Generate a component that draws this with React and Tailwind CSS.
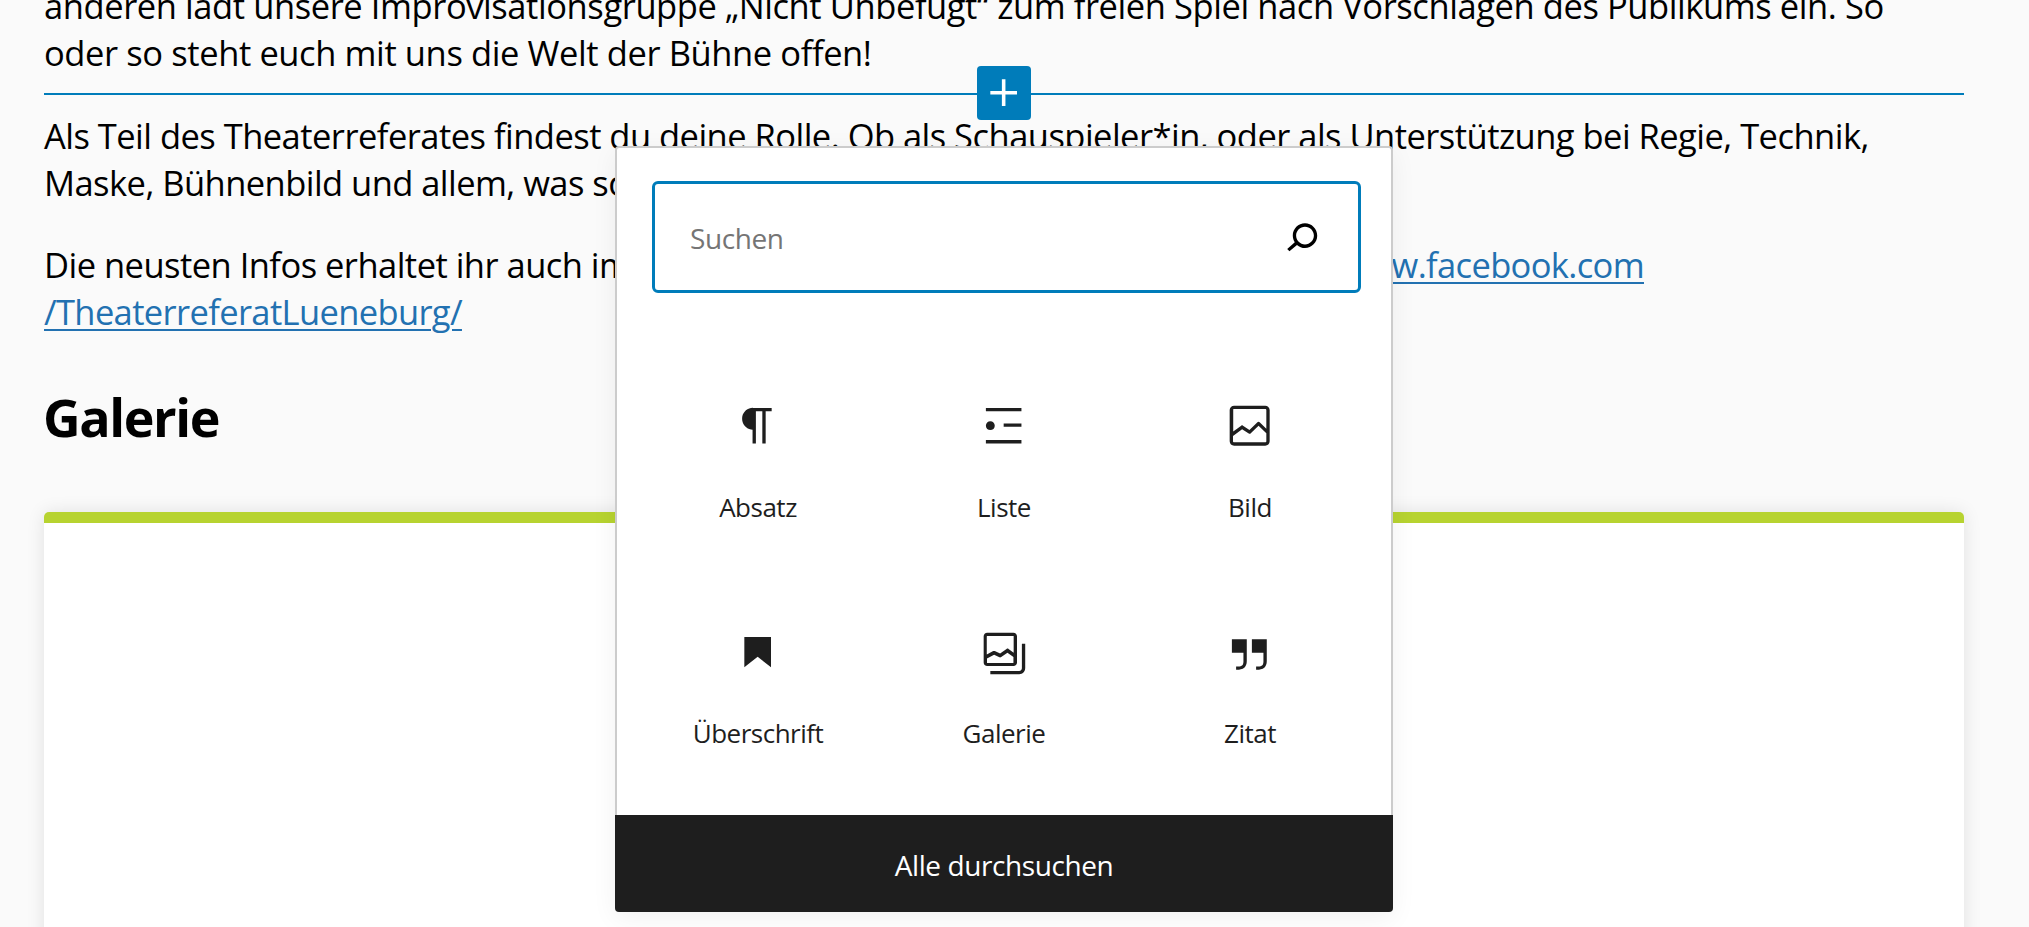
function Icon({ d, className = "" }) {
  return (
    <svg viewBox="0 0 24 24" fill="currentColor" className={`size-[53.33px] shrink-0 ${className}`} aria-hidden="true">
      <path d={d} />
    </svg>
  );
}

const plus = "M18 11.2h-5.2V6h-1.6v5.2H6v1.6h5.2V18h1.6v-5.2H18z";
const search =
  "M13.5 6C10.5 6 8 8.5 8 11.5c0 1.1.3 2.1.9 3l-3.4 3 1 1.1 3.4-2.9c1 .9 2.2 1.4 3.6 1.4 3 0 5.5-2.5 5.5-5.5C19 8.5 16.5 6 13.5 6zm0 9.5c-2.2 0-4-1.8-4-4s1.8-4 4-4 4 1.8 4 4-1.8 4-4 4z";

const blocks = [
  {
    label: "Absatz",
    d: "M18.3 4H9.9v-.1l-.9.2c-2.3.4-4 2.4-4 4.8s1.7 4.4 4 4.8l.7.1V20h1.5V5.5h2.9V20h1.5V5.5h2.7V4z",
  },
  {
    label: "Liste",
    d: "M4 4v1.5h16V4H4zm8 8.5h8V11h-8v1.5zM4 20h16v-1.5H4V20zm4-8c0-1.1-.9-2-2-2s-2 .9-2 2 .9 2 2 2 2-.9 2-2z",
  },
  {
    label: "Bild",
    d: "M19 3H5c-1.1 0-2 .9-2 2v14c0 1.1.9 2 2 2h14c1.1 0 2-.9 2-2V5c0-1.1-.9-2-2-2zM5 4.5h14c.3 0 .5.2.5.5v8.4l-3-2.9c-.3-.3-.8-.3-1 0L11.9 14 9 12c-.3-.2-.6-.2-.8 0l-3.6 2.6V5c-.1-.3.1-.5.4-.5zm14 15H5c-.3 0-.5-.2-.5-.5v-2.4l4.1-3 3 1.9c.3.2.7.2.9-.1L16 12l3.5 3.4V19c0 .3-.2.5-.5.5z",
  },
  { label: "Überschrift", d: "M6 5V18.5911L12 13.8473L18 18.5911V5H6Z" },
  {
    label: "Galerie",
    d: "M20.2 8v11c0 .7-.6 1.2-1.2 1.2H6v1.5h13c1.5 0 2.7-1.2 2.7-2.8V8zM18 16.4V4.6c0-.9-.7-1.6-1.6-1.6H4.6C3.7 3 3 3.7 3 4.6v11.8c0 .9.7 1.6 1.6 1.6h11.8c.9 0 1.6-.7 1.6-1.6zM4.5 4.6c0-.1.1-.1.1-.1h11.8c.1 0 .1.1.1.1V12l-2.3-1.7c-.3-.2-.6-.2-.9 0l-2.9 2.1L8 11.3c-.2-.1-.5-.1-.7 0l-2.9 1.5V4.6zm0 11.8v-1.8l3.2-1.7 2.4 1.2c.2.1.5.1.8-.1l2.8-2 2.7 2v2.5c0 .1-.1.1-.1.1H4.6c0 .1-.1 0-.1-.1z",
  },
  {
    label: "Zitat",
    d: "M13 6v6h5.2v4c0 .8-.2 1.4-.5 1.7-.6.6-1.6.6-2.5.5h-.3v1.5h.5c1 0 2.3-.1 3.3-1 .6-.6 1-1.6 1-2.8V6H13zm-9 6h5.2v4c0 .8-.2 1.4-.5 1.7-.6.6-1.6.6-2.5.5h-.3v1.5h.5c1 0 2.3-.1 3.3-1 .6-.6 1-1.6 1-2.8V6H4v6z",
  },
];

function InsertionPoint() {
  return (
    <div className="absolute top-[66px] left-[44px] flex h-[54px] w-[1920px] justify-center">
      <div className="absolute inset-x-0 top-[27px] h-[2px] bg-[#007cba]" />
      <button className="relative flex size-[54px] items-start justify-center rounded-[4px] bg-[#007cba] text-white">
        <Icon d={plus} />
      </button>
    </div>
  );
}

function Inserter() {
  return (
    <div className="absolute top-[146px] left-[615px] w-[778px] rounded-[4px] shadow-[0_6px_26px_rgba(0,0,0,0.06)]">
      <div className="h-[669px] rounded-t-[4px] border-2 border-b-0 border-[#ccc] bg-white pt-[33px]">
        <div className="ml-[35px] flex h-[112px] w-[709px] items-center justify-between rounded-[6px] border-[3px] border-[#007cba] pr-[30px] pl-[35px]">
          <span className="pt-[2px] text-[28px] leading-[38px] tracking-[-0.4px] text-[#757575]">Suchen</span>
          <Icon d={search} className="text-black" />
        </div>
        <div className="mt-[106px] ml-[18px] grid w-[738px] grid-cols-3 gap-y-[0.7px]">
          {blocks.map((b) => (
            <button key={b.label} className="flex h-[226px] flex-col items-center text-[#1e1e1e]">
              <Icon d={b.d} />
              <span className="mt-[36.2px] text-[26px] leading-[36px] tracking-[-0.5px]">{b.label}</span>
            </button>
          ))}
        </div>
      </div>
      <button className="flex h-[97px] w-full items-center justify-center rounded-b-[4px] bg-[#1e1e1e] pt-[3px] text-[28px] tracking-[-0.42px] text-white">
        Alle durchsuchen
      </button>
    </div>
  );
}

export default function App() {
  return (
    <div className="relative h-[927px] w-full overflow-hidden bg-[#fafafa] font-['Open_Sans','Noto_Sans',sans-serif] text-black">
      <main className="flex w-[1964px] flex-col pl-[44px] text-[34.5px] leading-[47px] whitespace-nowrap">
        <p className="-mt-[18px]">
          <span className="block tracking-[-0.42px]">
            anderen lädt unsere Improvisationsgruppe „Nicht Unbefugt“ zum freien Spiel nach Vorschlägen des Publikums ein. So
          </span>
          <span className="block tracking-[-0.4px]">oder so steht euch mit uns die Welt der Bühne offen!</span>
        </p>
        <p className="mt-[36px]">
          <span className="block tracking-[-0.53px]">
            Als Teil des Theaterreferates findest du deine Rolle. Ob als Schauspieler*in, oder als Unterstützung bei Regie, Technik,
          </span>
          <span className="block tracking-[-0.55px]">Maske, Bühnenbild und allem, was sonst</span>
        </p>
        <div className="mt-[35px] tracking-[-0.53px]">
          <div className="flex w-[1600px] justify-between">
            <span>Die neusten Infos erhaltet ihr auch im Internet:</span>
            <a className="tracking-[-0.65px] text-[#2271b1] underline decoration-2 underline-offset-[4px]">www.facebook.com</a>
          </div>
          <a className="block tracking-[-0.64px] text-[#2271b1] underline decoration-2 underline-offset-[4px]">
            /TheaterreferatLueneburg/
          </a>
        </div>
        <h2 className="mt-[52px] -ml-px text-[52px] leading-[60px] font-bold tracking-[-1.4px]">Galerie</h2>
        <div className="mt-[65px] h-[440px] rounded-[5px] border-t-[11px] border-[#b7d330] bg-white shadow-[0_0_18px_rgba(0,0,0,0.1)]" />
      </main>
      <InsertionPoint />
      <Inserter />
    </div>
  );
}
